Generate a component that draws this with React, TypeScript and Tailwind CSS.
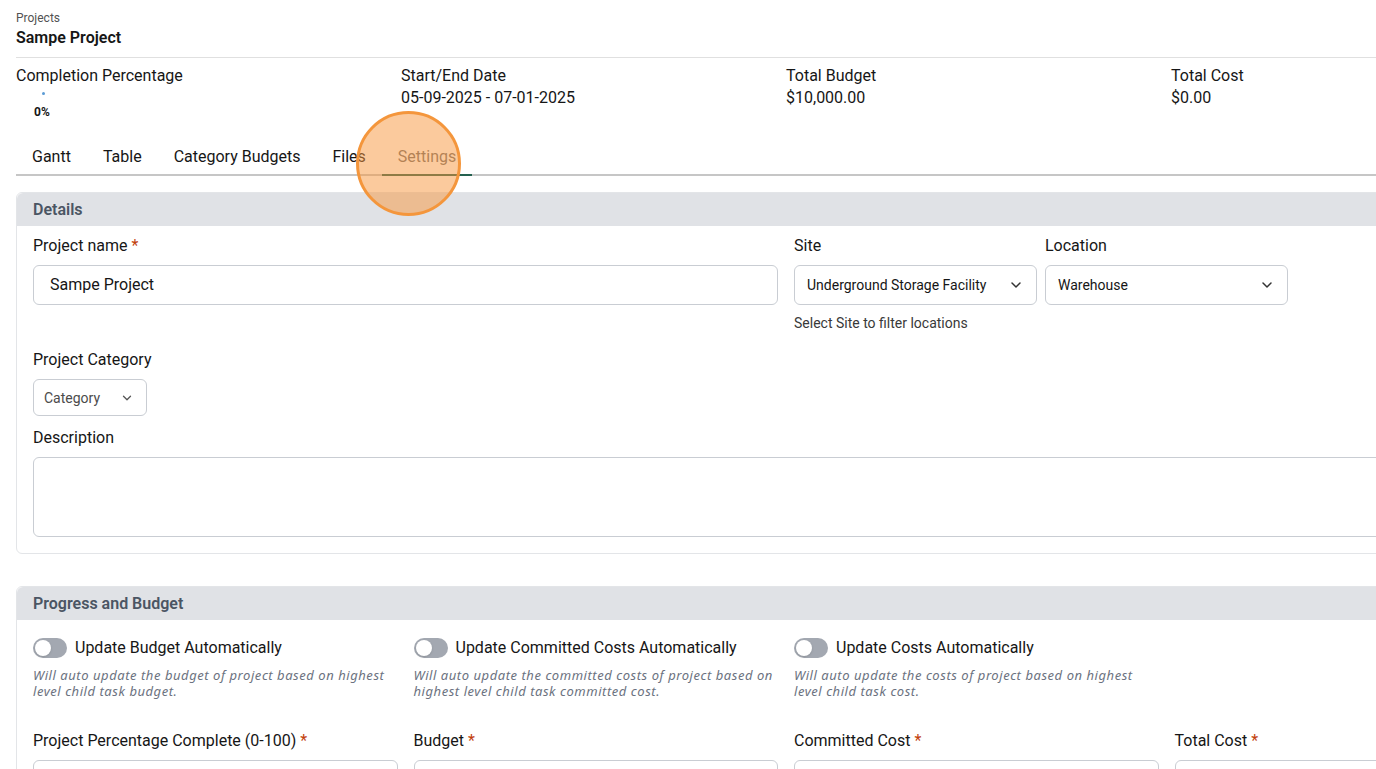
import React from "react";
import { ChevronDown } from "lucide-react";

const FONT = "font-['Roboto','Liberation_Sans',sans-serif]";

function Req() {
  return <span className="ml-1 text-[#c2410c]">*</span>;
}

function Label({ children }: { children: React.ReactNode }) {
  return <div className="pt-px text-base leading-6 text-[#161616]">{children}</div>;
}

function Toggle({ label, help }: { label: string; help: string }) {
  return (
    <div>
      <div className="flex items-center gap-2 pt-px">
        <span className="relative inline-flex h-5 w-[34px] items-center rounded-full bg-[#a3a8b1]">
          <span className="absolute left-[2px] h-4 w-4 rounded-full bg-white shadow-sm" />
        </span>
        <span className="text-base leading-6 text-[#161616]">{label}</span>
      </div>
      <p className="mt-[7px] w-[362px] font-['Noto_Sans','Liberation_Sans',sans-serif] text-[13px] italic leading-4 tracking-[0.55px] text-[#6b7280]">
        {help}
      </p>
    </div>
  );
}

function Field({ label }: { label: string }) {
  return (
    <div>
      <Label>
        {label}
        <Req />
      </Label>
      <div className="mt-[7px] h-10 rounded-md border border-[#c9cdd3] bg-white" />
    </div>
  );
}

export default function App() {
  const tabs = ["Gantt", "Table", "Category Budgets", "Files", "Settings"];
  return (
    <div className={`relative h-[769px] w-[1376px] overflow-hidden bg-white ${FONT}`}>
      <div className="w-[1556px] pl-4">
        {/* breadcrumb + title */}
        <div className="border-b border-[#e0e0e0] pb-[7px] pt-[10px]">
          <div className="text-xs leading-4 text-[#525252]">Projects</div>
          <div className="text-base font-semibold leading-6 text-[#161616]">Sampe Project</div>
        </div>

        {/* summary stats */}
        <div className="mt-[7px] grid w-[1540px] grid-cols-4 text-base leading-[22px] text-[#161616]">
          <div>
            <div>Completion Percentage</div>
            <div className="ml-[26px] mt-[5px] h-[3px] w-[3px] rounded-full bg-[#5b9bd5]" />
            <div className="ml-[18px] mt-[9px] text-xs font-bold leading-4">0%</div>
          </div>
          <div>
            <div>Start/End Date</div>
            <div>05-09-2025 - 07-01-2025</div>
          </div>
          <div>
            <div>Total Budget</div>
            <div>$10,000.00</div>
          </div>
          <div>
            <div>Total Cost</div>
            <div>$0.00</div>
          </div>
        </div>

        {/* tabs */}
        <div className="mt-4 flex border-b-2 border-[#c6c6c6]">
          {tabs.map((t) => (
            <div
              key={t}
              className={`-mb-[2px] border-b-2 px-4 pb-[5px] pt-[9px] text-base leading-6 ${
                t === "Settings" ? "border-[#24614f] text-[#6f6f6f]" : "border-transparent text-[#161616]"
              }`}
            >
              {t}
            </div>
          ))}
        </div>

        {/* details card */}
        <div className="mt-4 w-[1540px] rounded-md border border-[#e3e5e8]">
          <div className="flex h-[33px] items-center rounded-t-md bg-[#e0e2e6] px-4 text-base font-semibold text-[#4b5563]">
            Details
          </div>
          <div className="px-4 pb-4 pt-[7px]">
            <div className="grid grid-cols-4 gap-x-4">
              <div className="col-span-2">
                <Label>
                  Project name
                  <Req />
                </Label>
                <div className="mt-[7px] flex h-10 items-center rounded-md border border-[#c9cdd3] px-4 text-base text-[#161616]">
                  Sampe Project
                </div>
              </div>
              <div className="col-span-2 flex gap-2">
                <div className="w-[243px]">
                  <Label>Site</Label>
                  <div className="mt-[7px] flex h-10 items-center justify-between rounded-md border border-[#c9cdd3] pb-px pl-3 pr-3 text-sm text-[#161616]">
                    <span>Underground Storage Facility</span>
                    <ChevronDown size={16} strokeWidth={2.2} className="text-[#333]" />
                  </div>
                  <div className="mt-2 whitespace-nowrap text-sm leading-5 text-[#393939]">
                    Select Site to filter locations
                  </div>
                </div>
                <div className="w-[243px]">
                  <Label>Location</Label>
                  <div className="mt-[7px] flex h-10 items-center justify-between rounded-md border border-[#c9cdd3] pb-px pl-3 pr-3 text-sm text-[#161616]">
                    <span>Warehouse</span>
                    <ChevronDown size={16} strokeWidth={2.2} className="text-[#333]" />
                  </div>
                </div>
              </div>
            </div>

            <div className="mt-[14px]">
              <Label>Project Category</Label>
            </div>
            <div className="mt-[7px] flex h-[37px] w-[114px] items-center justify-between rounded-md border border-[#c9cdd3] pl-[10px] pr-3 text-sm text-[#4b4b4b]">
              <span>Category</span>
              <ChevronDown size={14} strokeWidth={2.2} className="text-[#555]" />
            </div>

            <div className="mt-[9px]">
              <Label>Description</Label>
            </div>
            <div className="mt-[7px] h-20 rounded-md border border-[#c9cdd3]" />
          </div>
        </div>

        {/* progress and budget card */}
        <div className="mt-8 w-[1540px] rounded-md border border-[#e3e5e8]">
          <div className="flex h-[33px] items-center rounded-t-md bg-[#e0e2e6] px-4 text-base font-semibold text-[#4b5563]">
            Progress and Budget
          </div>
          <div className="px-4 pb-4 pt-[15px]">
            <div className="grid grid-cols-4 gap-x-4">
              <Toggle
                label="Update Budget Automatically"
                help="Will auto update the budget of project based on highest level child task budget."
              />
              <Toggle
                label="Update Committed Costs Automatically"
                help="Will auto update the committed costs of project based on highest level child task committed cost."
              />
              <Toggle
                label="Update Costs Automatically"
                help="Will auto update the costs of project based on highest level child task cost."
              />
            </div>
            <div className="mt-[29px] grid grid-cols-4 gap-x-4">
              <Field label="Project Percentage Complete (0-100)" />
              <Field label="Budget" />
              <Field label="Committed Cost" />
              <Field label="Total Cost" />
            </div>
          </div>
        </div>
      </div>

      {/* click highlight */}
      <div className="pointer-events-none absolute left-[356px] top-[111px] h-[105px] w-[105px] rounded-full border-[3px] border-[#f4963c] bg-[#f7953b]/50" />
    </div>
  );
}
